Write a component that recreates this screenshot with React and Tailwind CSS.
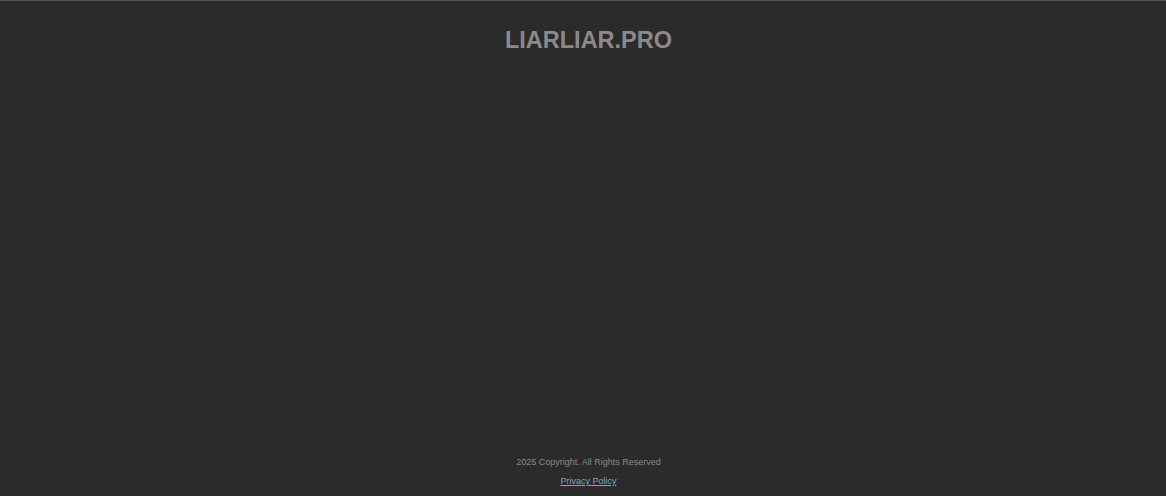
export default function App() {
  return (
    <div className="min-h-screen flex flex-col bg-[#2b2b2b] border-t border-[#555555] pl-[11px]" style={{ fontFamily: '"Liberation Sans", Arial, sans-serif' }}>
      <header className="pt-[26px] text-center">
        <h1 className="text-[23.5px] leading-[27px] font-bold text-[#8a8a8a]">LIARLIAR.PRO</h1>
      </header>
      <main className="flex-1" />
      <footer className="text-center pb-[8px]">
        <p className="text-[9px] leading-[13px] text-[#888888]">2025 Copyright. All Rights Reserved</p>
        <p className="mt-[6px] text-[9px] leading-[13px]">
          <a href="#" className="underline text-[#7fa8ad]">Privacy Policy</a>
        </p>
      </footer>
    </div>
  );
}
